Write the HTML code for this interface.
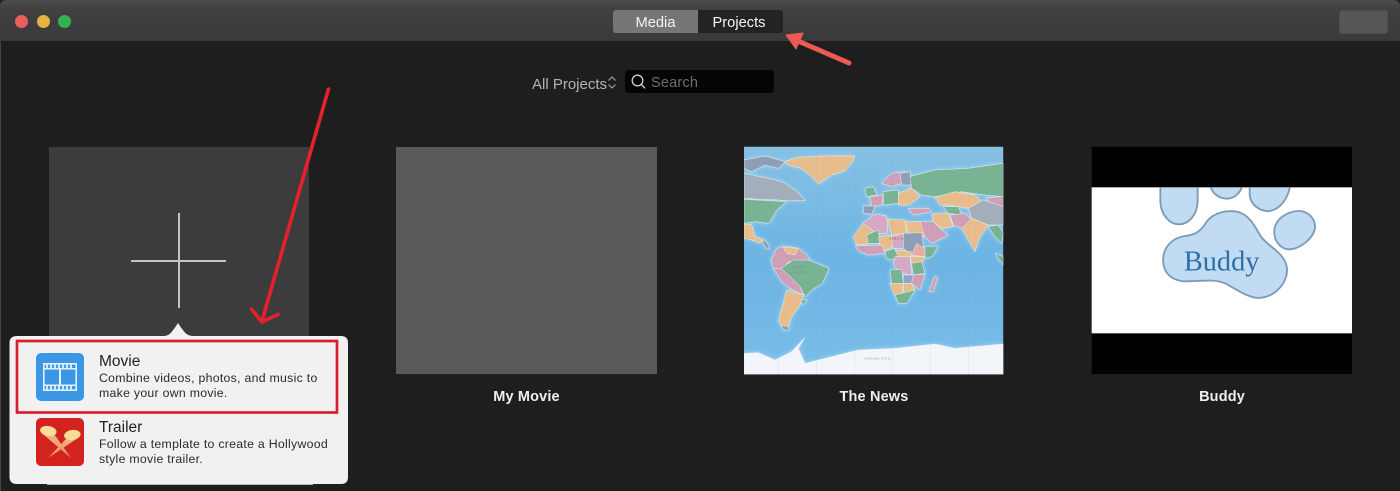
<!DOCTYPE html>
<html lang="en"><head><meta charset="utf-8"><title>iMovie Projects</title>
<style>
html,body{margin:0;padding:0;background:#1e1e1e}
body{width:1400px;height:491px;position:relative;overflow:hidden;font-family:"Liberation Sans",sans-serif}
.a{position:absolute}
.t{position:absolute;white-space:nowrap;line-height:1}
.thumb{position:absolute;top:147px;height:227px}
.lbl{position:absolute;top:389px;font-size:14.5px;font-weight:bold;color:#f0f0f0;text-align:center;line-height:17px;letter-spacing:.15px}
</style></head><body>
<div class="a" style="left:0;top:0;width:1400px;height:41px;background:linear-gradient(#4c4c4c,#404040 10px,#3a3a3a);border-radius:6px 6px 0 0"></div>
<div class="a" style="left:0;top:41px;width:1px;height:450px;background:#444"></div>
<div class="a" style="left:15px;top:15px;width:13px;height:13px;border-radius:50%;background:#e8605c"></div>
<div class="a" style="left:37px;top:15px;width:13px;height:13px;border-radius:50%;background:#e3b53f"></div>
<div class="a" style="left:58px;top:15px;width:13px;height:13px;border-radius:50%;background:#34b04f"></div>

<div class="a" style="left:613px;top:10px;width:85px;height:23px;background:#767676;border-radius:3px 0 0 3px"></div>
<div class="a" style="left:698px;top:10px;width:85px;height:23px;background:#232323;border-radius:0 3px 3px 0"></div>
<div class="t" style="left:613px;top:16px;width:85px;text-align:center;font-size:14.7px;color:#f4f4f4">Media</div>
<div class="t" style="left:698px;top:16px;width:82px;text-align:center;font-size:14.7px;color:#f4f4f4">Projects</div>
<div class="a" style="left:1339px;top:10px;width:49px;height:24px;background:#565656;border-radius:4px;box-shadow:inset 0 0 0 1px #4e4e4e"></div>

<div class="t" style="left:532px;top:77px;font-size:15px;color:#b4b4b4">All Projects</div>
<svg class="a" style="left:606px;top:75px" width="12" height="15" viewBox="0 0 12 15" fill="none" stroke="#a8a8a8" stroke-width="1"><path d="M2.5 5.5 6 2l3.5 3.500M2.500 9.500 6 13l3.500-3.500"/></svg>
<div class="a" style="left:625px;top:70px;width:149px;height:23px;background:#050505;border-radius:3px"></div>
<svg class="a" style="left:630px;top:73px" width="17" height="17" viewBox="0 0 17 17" fill="none" stroke="#d4d4d4" stroke-width="1.300"><circle cx="7.500" cy="7.500" r="5.300"/><path d="m11.300 11.500 3.800 3.800"/></svg>
<div class="t" style="left:651px;top:76px;font-size:14.500px;color:#6e6e6e;letter-spacing:.2px">Search</div>

<div class="thumb" style="left:49px;width:260px;height:200px;background:#3c3c3c"></div>
<div class="a" style="left:177.500px;top:213px;width:2px;height:94.500px;background:#c4c4c4"></div>
<div class="a" style="left:131px;top:259.500px;width:94.500px;height:2px;background:#c4c4c4"></div>

<div class="thumb" style="left:396px;width:261px;background:#595959"></div>
<div class="lbl" style="left:396px;width:261px">My Movie</div>

<svg class="a" style="left:735px;top:140px" width="280" height="245" viewBox="0 0 840 735">
<defs><linearGradient id="oc" x1="0" y1="0" x2="0" y2="1"><stop offset="0" stop-color="#86c0e2"/><stop offset=".5" stop-color="#6cb4e4"/><stop offset="1" stop-color="#7abde8"/></linearGradient><clipPath id="mc"><rect x="27" y="20" width="778" height="683"/></clipPath></defs>
<g clip-path="url(#mc)">
<rect x="27" y="20" width="778" height="683" fill="url(#oc)"/>
<g stroke="#e8f0f2" stroke-width="1.500" stroke-linejoin="round" style="filter:drop-shadow(0 0 7px #a8d6f0) blur(.9px)">
<path fill="#e9bd8b" d="M148 65 190 52 270 48 360 48 352 65 330 92 290 105 250 132 232 110 200 85 160 75Z"/>
<path fill="#8e9fb5" d="M27 60 90 48 150 65 130 85 90 75 50 95 27 85Z"/>
<path fill="#a3aebb" d="M27 100 100 115 140 125 180 150 212 182 160 182 130 180 80 178 27 175Z"/>
<path fill="#78b394" d="M27 178 155 185 125 210 108 240 100 250 60 245 27 250Z"/>
<path fill="#e9bd8b" d="M27 252 50 255 60 290 85 298 75 310 45 298 27 295Z"/>
<path fill="#8fa3ad" d="M80 300 95 305 105 328 90 322Z"/>
<path fill="#cf9fb7" d="M108 360 125 325 150 318 190 325 215 345 225 360 160 365 135 400 115 385Z"/>
<path fill="#e9bd8b" d="M145 322 190 325 180 345 155 340Z"/>
<path fill="#78b394" d="M138 385 175 360 220 360 282 385 262 430 230 450 210 470 195 440 165 410 150 400Z"/>
<path fill="#cf9fb7" d="M115 385 138 385 165 410 195 440 205 465 165 445 140 425Z"/>
<path fill="#e9bd8b" d="M155 450 205 465 195 495 170 530 160 560 140 560 130 540 145 490Z"/>
<path fill="#8fa3ad" d="M138 555 160 560 165 570 145 570Z"/>
<path fill="#78b394" d="M196 480 218 480 205 495Z"/>
<path fill="#cf9fb7" d="M438 130 470 100 510 95 525 110 500 130 470 140Z"/>
<path fill="#8e9fb5" d="M495 100 525 95 530 135 500 135Z"/>
<path fill="#78b394" d="M390 145 415 140 425 165 395 170Z"/>
<path fill="#cf9fb7" d="M405 170 445 165 440 195 410 200Z"/>
<path fill="#78b394" d="M445 155 490 150 490 190 445 195Z"/>
<path fill="#e9bd8b" d="M490 160 530 145 555 170 520 195 490 195Z"/>
<path fill="#8e9fb5" d="M385 198 420 198 410 222 385 220Z"/>
<path fill="#cf9fb7" d="M520 205 580 205 590 215 535 225Z"/>
<path fill="#78b394" d="M525 110 600 90 700 85 805 70 805 170 750 165 680 155 600 170 560 165 530 145Z"/>
<path fill="#e9bd8b" d="M600 172 660 155 720 165 738 185 700 205 640 195 615 195Z"/>
<path fill="#cf9fb7" d="M755 175 805 168 805 200 770 195Z"/>
<path fill="#a3aebb" d="M700 205 745 180 805 200 805 255 760 255 710 235Z"/>
<path fill="#78b394" d="M625 200 670 200 680 225 640 220Z"/>
<path fill="#cf9fb7" d="M645 225 690 220 710 240 680 265 655 255Z"/>
<path fill="#e9bd8b" d="M590 222 640 220 655 260 620 265 595 245Z"/>
<path fill="#e9bd8b" d="M680 265 710 235 760 255 735 290 720 335 700 300Z"/>
<path fill="#78b394" d="M760 260 790 255 805 280 800 310 780 290Z"/>
<path fill="#cf9fb7" d="M550 245 595 245 620 270 640 285 590 310 570 290Z"/>
<path fill="#78b394" d="M780 340 805 350 805 375 790 355Z"/>
<path fill="#e9bd8b" d="M355 290 385 250 420 255 430 290 395 312 365 315Z"/>
<path fill="#d6a8c4" d="M385 250 420 222 455 228 458 280 425 280Z"/>
<path fill="#e9bd8b" d="M458 238 510 240 515 280 470 285Z"/>
<path fill="#e9bd8b" d="M510 245 555 245 570 290 520 280Z"/>
<path fill="#78b394" d="M395 285 430 270 435 310 400 310Z"/>
<path fill="#e9bd8b" d="M430 290 470 285 475 320 440 335Z"/>
<path fill="#d6a8c4" d="M470 290 505 280 505 325 475 325Z"/>
<path fill="#8e9fb5" d="M505 280 560 278 565 320 530 345 505 325Z"/>
<path fill="#cf9fb7" d="M360 318 440 315 450 340 400 345 375 335Z"/>
<path fill="#78b394" d="M450 335 480 325 490 350 470 360 455 355Z"/>
<path fill="#e9bd8b" d="M480 330 530 335 525 350 490 350Z"/>
<path fill="#e9a9a0" d="M545 310 590 340 565 350 530 345Z"/>
<path fill="#78b394" d="M570 320 610 318 590 350 570 355Z"/>
<path fill="#d6a8c4" d="M480 350 525 350 530 405 500 400 475 375Z"/>
<path fill="#e9bd8b" d="M525 350 570 350 555 380 530 370Z"/>
<path fill="#78b394" d="M530 370 560 365 570 400 535 405Z"/>
<path fill="#78b394" d="M465 390 500 388 505 430 470 430Z"/>
<path fill="#8fa3ce" d="M505 405 535 405 540 430 505 430Z"/>
<path fill="#cf9fb7" d="M535 405 570 402 555 450 530 430Z"/>
<path fill="#e9bd8b" d="M465 430 505 430 500 465 478 465Z"/>
<path fill="#e9bd8b" d="M505 430 530 430 540 450 505 465Z"/>
<path fill="#78b394" d="M480 465 540 450 515 490 490 490Z"/>
<path fill="#d79aa9" d="M600 408 607 412 595 455 582 455Z"/>
<path fill="#f2f6fb" d="M27 640 70 638 120 660 170 635 210 592 190 625 210 670 290 650 370 630 480 625 600 612 660 625 690 622 805 612 805 703 27 703Z"/>
</g>
<g stroke="#7ea9c8" stroke-width=".8" fill="none" opacity=".45"><path d="M130 20V703M245 20V703M360 20V703M472 20V703M586 20V703M700 20V703"/></g>
<g fill="#7d8a96" font-family="Liberation Serif,serif" font-size="10" letter-spacing="1.500"><text x="388" y="658">ANTARCTICA</text><text x="170" y="386">SOUTH</text><text x="163" y="400">AMERICA</text><text x="462" y="298" fill="#6b5f5a">AFRICA</text></g>
</g></svg>

<div class="lbl" style="left:744px;width:260px">The News</div>

<svg class="a" style="left:1085px;top:140px" width="280" height="270" viewBox="0 0 840 810">
<defs><clipPath id="pc"><rect x="20" y="143" width="781" height="437"/></clipPath></defs>
<rect x="20" y="20" width="781" height="682" fill="#000"/>
<rect x="20" y="142" width="781" height="438" fill="#fff"/>
<g clip-path="url(#pc)" fill="#c1dbf3" stroke="#7b9cb6" stroke-width="5.500">
<path d="M226 130V180C226 225 255 254 283 253 312 252 336 225 338 185V130Z"/>
<path d="M375 130C378 160 402 176 428 176 452 174 470 155 473 130Z"/>
<path d="M494 130V165C497 195 525 215 553 213 585 208 612 175 616 130Z"/>
<path d="M568 270C572 235 610 212 645 213 675 216 692 240 690 265 685 295 645 328 612 328 585 327 565 300 568 270Z"/>
<path d="M235 370C230 330 255 295 300 288 335 284 350 270 365 245 385 218 425 208 460 216 490 225 505 250 525 285 545 320 600 335 606 385 608 430 570 472 520 474 485 472 450 445 420 430 385 415 340 425 295 424 260 420 238 400 235 370Z"/>
</g>
<text x="410" y="392" text-anchor="middle" font-family="Liberation Serif,serif" font-size="85" fill="#2f6fa8">Buddy</text>
</svg>
<div class="lbl" style="left:1092px;width:260px">Buddy</div>

<svg class="a" style="left:0;top:310px" width="360" height="181" viewBox="0 0 360 181">
<defs><linearGradient id="b1" x1="0" y1="0" x2="0" y2="1"><stop offset="0" stop-color="#f0b685"/><stop offset="1" stop-color="#ea9058"/></linearGradient></defs>
<path d="M165 26C170 25 172 22 178 13 184 22 186 25 192 26H341Q348 26 348 33V167Q348 174 341 174H17Q9.500 174 9.500 167V33Q9.500 26 17 26Z" fill="#f1f1f2"/>
<path d="M47 173H313V174.800H47Z" fill="#f1f1f2"/>
<rect x="17" y="31" width="320" height="71.500" fill="none" stroke="#d8202c" stroke-width="2.700"/>
<rect x="36" y="43" width="48" height="48" rx="5" fill="#3b96e6"/>
<g fill="none" stroke="#e4f1fc"><rect x="43.800" y="53.800" width="32.400" height="26.400" stroke-width="1.600"/><path d="M44 58.800H76M44 75.200H76" stroke-width="1.500"/><path d="M60 58.800V75.200" stroke-width="2"/><path d="M47 54v4M51 54v4M55 54v4M59 54v4M63 54v4M67 54v4M71 54v4M47 76v4M51 76v4M55 76v4M59 76v4M63 76v4M67 76v4M71 76v4" stroke-width="1.800"/></g>
<rect x="36" y="108" width="48" height="48" rx="5" fill="#d2231e"/>
<path d="M44 125 54 124 71 148Z" fill="url(#b1)"/>
<path d="M66 129 78 128 48 148Z" fill="url(#b1)"/>
<ellipse cx="48.300" cy="121" rx="8.300" ry="5" fill="#f8dc98" transform="rotate(10 48.300 121)"/>
<ellipse cx="72.300" cy="125" rx="8.300" ry="5" fill="#f8dc98" transform="rotate(-8 72.300 125)"/>
</svg>
<div class="t" style="left:99px;top:354px;font-size:15.500px;color:#222">Movie</div>
<div class="t" style="left:99px;top:372px;font-size:12.300px;color:#2a2a2a;letter-spacing:.28px">Combine videos, photos, and music to</div>
<div class="t" style="left:99px;top:387px;font-size:12.300px;color:#2a2a2a;letter-spacing:.28px">make your own movie.</div>
<div class="t" style="left:99px;top:420px;font-size:15.500px;color:#222">Trailer</div>
<div class="t" style="left:99px;top:437.500px;font-size:12.300px;color:#2a2a2a;letter-spacing:.28px">Follow a template to create a Hollywood</div>
<div class="t" style="left:99px;top:452.500px;font-size:12.300px;color:#2a2a2a;letter-spacing:.28px">style movie trailer.</div>

<svg class="a" style="left:0;top:0" width="1400" height="491" fill="none">
<path d="M328.500 89 262 321" stroke="#e6202c" stroke-width="3.600" stroke-linecap="round"/>
<path d="M251.500 309 262 322 278 314.500" stroke="#e6202c" stroke-width="3.600" stroke-linecap="round" stroke-linejoin="round"/>
<path d="M849 63 798 41" stroke="#ec5a55" stroke-width="5" stroke-linecap="round"/>
<path d="M786 35 803 33 796 49Z" fill="#ec5a55" stroke="#ec5a55" stroke-linejoin="round"/>
</svg>
</body></html>
